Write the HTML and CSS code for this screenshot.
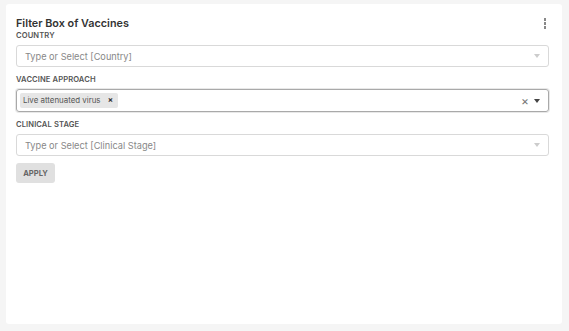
FILE: index.html
```html
<!DOCTYPE html>
<html>
<head>
<meta charset="utf-8">
<link rel="stylesheet" href="styles.css">
</head>
<body>
<div class="card">
  <div class="head">
    <div class="title">Filter Box of Vaccines</div>
    <div class="kebab"><span></span><span></span><span></span></div>
  </div>
  <div class="field">
    <div class="label">COUNTRY</div>
    <div class="select">
      <span class="ph">Type or Select [Country]</span>
      <span class="caret light"></span>
    </div>
  </div>
  <div class="field">
    <div class="label">VACCINE APPROACH</div>
    <div class="select focused">
      <span class="tag">Live attenuated virus <b>×</b></span>
      <span class="grow"></span>
      <span class="clear">×</span>
      <span class="caret dark"></span>
    </div>
  </div>
  <div class="field last">
    <div class="label">CLINICAL STAGE</div>
    <div class="select">
      <span class="ph">Type or Select [Clinical Stage]</span>
      <span class="caret light"></span>
    </div>
  </div>
  <button class="apply">APPLY</button>
</div>
</body>
</html>
```
FILE: styles.css
```css
html, body { margin: 0; padding: 0; }
body {
  background: #f5f5f5;
  font-family: Inter, "Noto Sans", sans-serif;
  padding: 4px 7px 7px 6px;
  height: 331px;
  box-sizing: border-box;
}
.card {
  background: #fff;
  border-radius: 3px;
  height: 320px;
  box-sizing: border-box;
  padding: 13px 13px 0 10px;
}
.head {
  display: flex;
  justify-content: space-between;
  align-items: flex-start;
}
.title {
  font-size: 10.8px;
  font-weight: 600;
  color: #333;
  line-height: 14px;
}
.kebab {
  display: flex;
  flex-direction: column;
  gap: 1.5px;
  padding-top: 1px;
  margin-right: 3px;
}
.kebab span {
  width: 2.5px;
  height: 2.5px;
  background: #888;
}
.field { display: flex; flex-direction: column; }
.label {
  font-size: 7.6px;
  font-weight: 600;
  color: #555;
  letter-spacing: 0.1px;
  line-height: 10px;
  margin-bottom: 4px;
}
.select {
  height: 22px;
  box-sizing: border-box;
  border: 1px solid #d9d9d9;
  border-radius: 3px;
  display: flex;
  align-items: center;
  padding: 0 8px 0 8px;
  margin-bottom: 8px;
}
.select.focused {
  height: 23px;
  border-color: #a9a9a9;
  box-shadow: 0 0 0 1px #e8e8e8;
  padding-left: 3px;
  margin-bottom: 8px;
}
.field.last .select { margin-bottom: 7px; }
.ph {
  flex: 1;
  font-size: 9.2px;
  color: #888;
}
.tag {
  background: #e6e6e6;
  border-radius: 2px;
  font-size: 7.9px;
  color: #555;
  padding: 2px 5px 3px 3px;
  line-height: 10px;
}
.tag b { margin-left: 5px; font-weight: 700; color: #333; }
.grow { flex: 1; }
.clear {
  font-size: 12px;
  color: #777;
  margin-right: 5px;
  line-height: 10px;
}
.caret {
  width: 0; height: 0;
  border-left: 3.5px solid transparent;
  border-right: 3.5px solid transparent;
  border-top: 4px solid #ccc;
}
.caret.dark { border-top-color: #444; }
.apply {
  display: block;
  background: #e0e0e0;
  border: none;
  border-radius: 3px;
  font-family: Inter, sans-serif;
  font-size: 7.6px;
  font-weight: 700;
  color: #666;
  width: 39px;
  height: 20px;
  padding: 0;
}
```
